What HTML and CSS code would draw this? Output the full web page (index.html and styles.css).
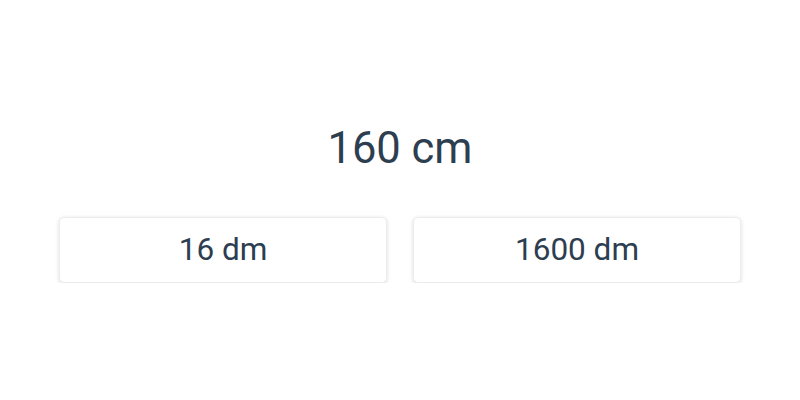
FILE: index.html
```html
<!DOCTYPE html>
<html lang="en">
<head>
<meta charset="utf-8">
<title>Unit quiz</title>
<link rel="stylesheet" href="styles.css">
</head>
<body>
  <main class="quiz">
    <h1 class="question">160 cm</h1>
    <div class="answers">
      <button class="answer" type="button">16 dm</button>
      <button class="answer" type="button">1600 dm</button>
    </div>
  </main>
</body>
</html>
```
FILE: styles.css
```css
html, body {
  margin: 0;
  padding: 0;
  background: #ffffff;
}

body {
  font-family: Roboto, "Liberation Sans", sans-serif;
  color: #2c3e50;
}

.quiz {
  display: flex;
  flex-direction: column;
  align-items: center;
  padding: 123px 59px 0;
}

.question {
  margin: 0;
  font-size: 43.5px;
  font-weight: 400;
  line-height: 52px;
}

.answers {
  align-self: stretch;
  display: grid;
  grid-template-columns: 1fr 1fr;
  gap: 26px;
  margin-top: 42px;
}

.answer {
  height: 66px;
  padding: 0 0 2px;
  background: #ffffff;
  border: 1px solid #ececec;
  border-radius: 5px;
  box-shadow: 0 1px 4px rgba(0, 0, 0, 0.14);
  font-family: inherit;
  font-size: 31.5px;
  color: #2c3e50;
  cursor: pointer;
}
```
